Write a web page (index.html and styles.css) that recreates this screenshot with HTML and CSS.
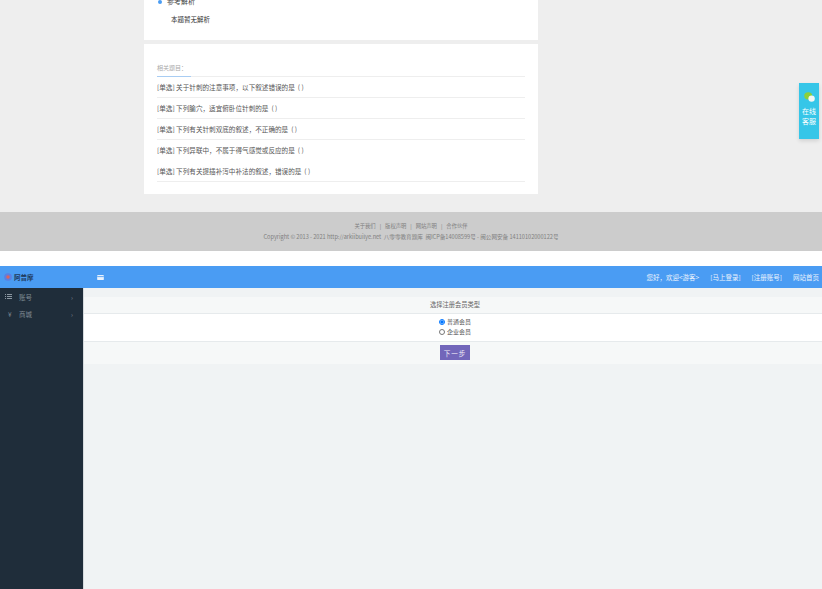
FILE: index.html
```html
<!DOCTYPE html>
<html lang="zh-CN">
<head>
  <meta charset="UTF-8">
  <title>注册会员</title>
  <link rel="stylesheet" href="styles.css">
</head>
<body>
  <!-- Question page -->
  <div class="question-page">
    <div class="card card-answer">
      <div class="answer-title">参考解析</div>
      <div class="answer-text">本题暂无解析</div>
    </div>
    <div class="card card-related">
      <div class="related-head"><span>相关题目&#65306;</span></div>
      <div class="related-row">[单选] 关于针刺的注意事项&#65292;以下叙述错误的是&nbsp;&nbsp;(&nbsp;)</div>
      <div class="related-row">[单选] 下列腧穴&#65292;适宜俯卧位针刺的是&nbsp;&nbsp;(&nbsp;)</div>
      <div class="related-row">[单选] 下列有关针刺双底的叙述&#65292;不正确的是&nbsp;&nbsp;(&nbsp;)</div>
      <div class="related-row row-plain">[单选] 下列异联中&#65292;不属于得气感觉或反应的是&nbsp;&nbsp;(&nbsp;)</div>
      <div class="related-row">[单选] 下列有关提插补泻中补法的叙述&#65292;错误的是&nbsp;&nbsp;(&nbsp;)</div>
    </div>
  </div>

  <div class="footer">
    <div class="footer-links"><span>关于我们</span><span>|</span><span>版权声明</span><span>|</span><span>网站声明</span><span>|</span><span>合作伙伴</span></div>
    <div>Copyright © 2013 - 2021 http://arkiibuilye.net &nbsp;八零零教育题库 &nbsp;闽ICP备14008599号 - 闽公网安备 14110102000122号</div>
  </div>

  <!-- Register page -->
  <div class="topbar">
    <div class="brand">
      <svg class="brand-logo" viewBox="0 0 10 10"><circle cx="5" cy="5" r="4.8" fill="#5d7fe0"/><circle cx="5" cy="5" r="2.2" fill="#d8665f"/></svg>
      <span>阿普摩</span>
    </div>
    <svg class="menu-icon" viewBox="0 0 8 6"><rect width="8" height="6" rx="1" fill="#e8f2fd"/><rect y="1.5" width="8" height="1" fill="#4a9cf3"/></svg>
    <div class="top-links">
      <span>您好&#65292;欢迎&lt;游客&gt;</span>
      <span>[马上登录]</span>
      <span>[注册账号]</span>
      <span>网站首页</span>
    </div>
  </div>
  <div class="main">
    <div class="sidebar">
      <div class="side-item">
        <svg class="side-icon" viewBox="0 0 7 5"><path d="M0 0h1v1H0zM2 0h5v1H2zM0 2h1v1H0zM2 2h5v1H2zM0 4h1v1H0zM2 4h5v1H2z" fill="#8b97a1"/></svg>
        <span class="side-label">账号</span><span class="side-arrow">›</span>
      </div>
      <div class="side-item">
        <span class="side-yen">¥</span>
        <span class="side-label">商城</span><span class="side-arrow">›</span>
      </div>
    </div>
    <div class="content">
      <div class="panel">
        <div class="panel-head">选择注册会员类型</div>
        <div class="panel-body">
          <label class="radio-row"><input type="radio" name="type" checked>普通会员</label>
          <label class="radio-row"><input type="radio" name="type">企业会员</label>
        </div>
        <div class="panel-foot"><button class="next-btn">下一步</button></div>
      </div>
    </div>
  </div>

  <!-- Floating service tab -->
  <div class="service">
    <svg class="service-icon" viewBox="0 0 11 10"><ellipse cx="4.2" cy="3.8" rx="4" ry="3.6" fill="#8ccf3a"/><circle cx="7.6" cy="6.6" r="3.2" fill="#f2f6f4"/></svg>
    <div>在线<br>客服</div>
  </div>
</body>
</html>
```

FILE: styles.css
```css
html, body {
  margin: 0;
  height: 589px;
  overflow: hidden;
}
body {
  position: relative;
  font-family: "Noto Sans CJK SC", "Liberation Sans", sans-serif;
  font-size: 6.5px;
  background: #fff;
  color: #555;
  display: flex;
  flex-direction: column;
}
.question-page {
  background: #eeeeee;
  height: 212px;
  box-sizing: border-box;
  padding-left: 144px;
}
.card {
  width: 394px;
  background: #fff;
  box-sizing: border-box;
}
.card-answer {
  height: 40px;
  margin-bottom: 4px;
  position: relative;
  padding: 0 0 0 23px;
  color: #444;
}
.answer-title {
  height: 3px;
  line-height: 3px;
  font-size: 7px;
}
.answer-title::before {
  content: "";
  position: absolute;
  left: 14px;
  top: 0;
  width: 4px;
  height: 4px;
  border-radius: 50%;
  background: #4a9cf3;
}
.answer-text {
  margin: 12px 0 0 4px;
  font-size: 6.5px;
  line-height: 8px;
  color: #333;
}
.card-related {
  height: 150px;
  padding: 17px 13px 0;
}
.related-head {
  height: 15px;
  border-bottom: 1px solid #eee;
  color: #aaa;
  font-size: 6px;
  line-height: 14px;
}
.related-head span {
  display: inline-block;
  width: 34px;
  height: 15px;
  border-bottom: 1px solid #a9cdf3;
}
.related-row {
  height: 20px;
  line-height: 20px;
  border-bottom: 1px solid #eee;
  white-space: nowrap;
  font-size: 6.6px;
}
.row-plain {
  border-bottom-color: #fff;
}
.footer {
  height: 39px;
  background: #cccccc;
  box-sizing: border-box;
  padding-top: 9px;
  text-align: center;
  color: #808080;
  font-size: 5.6px;
  line-height: 11px;
}
.footer-links {
  display: flex;
  justify-content: center;
  gap: 4px;
  font-size: 5.3px;
}
.topbar {
  margin-top: 15px;
  height: 22px;
  background: #4a9cf3;
  display: flex;
  align-items: center;
  color: #eaf3fd;
}
.brand {
  width: 97px;
  display: flex;
  align-items: center;
  gap: 2px;
  padding-left: 4px;
  box-sizing: border-box;
  color: #1f3a5c;
  font-weight: bold;
}
.brand-logo {
  width: 8px;
  height: 8px;
}
.menu-icon {
  width: 7px;
  height: 5px;
}
.top-links {
  margin-left: auto;
  display: flex;
  gap: 11px;
  padding-right: 3px;
}
.main {
  flex: 1;
  display: flex;
}
.sidebar {
  width: 84px;
  background: #1f2d3a;
  border-right: 1px solid #d5dadd;
  box-sizing: border-box;
}
.side-item {
  height: 17.5px;
  display: flex;
  align-items: center;
  padding: 0 10px 0 5px;
  color: #7f8b95;
}
.side-icon {
  width: 7px;
  height: 5px;
  margin-right: 7px;
}
.side-yen {
  width: 14px;
  padding-left: 3px;
  box-sizing: border-box;
}
.side-label {
  flex: 1;
}
.content {
  flex: 1;
  background: #f0f3f4;
  padding-top: 9px;
}
.panel {
  text-align: center;
}
.panel-head, .panel-body, .panel-foot {
  padding-left: 4px;
}
.panel-head {
  height: 16px;
  line-height: 16px;
  background: #f6f8f8;
  border-bottom: 1px solid #e6eaec;
  color: #666;
  font-size: 6.25px;
}
.panel-body {
  background: #fff;
  height: 28px;
  box-sizing: border-box;
  padding-top: 3px;
  border-bottom: 1px solid #e6eaec;
  font-size: 6px;
}
.radio-row {
  display: flex;
  justify-content: center;
  align-items: center;
  gap: 2px;
  height: 10px;
  line-height: 10px;
}
.radio-row input {
  width: 6px;
  height: 6px;
  margin: 0;
}
.panel-foot {
  height: 22px;
  background: #f6f8f8;
  padding-top: 3px;
  box-sizing: border-box;
}
.next-btn {
  width: 30px;
  height: 15px;
  padding: 0;
  border: none;
  background: #7266ba;
  color: #f0eef8;
  font-family: inherit;
  font-size: 6.5px;
  letter-spacing: 1px;
}
.service {
  position: absolute;
  right: 3px;
  top: 83px;
  width: 20px;
  height: 56px;
  box-sizing: border-box;
  padding-top: 9px;
  background: #36c6e8;
  color: #fff;
  text-align: center;
  font-size: 7px;
  line-height: 9.5px;
  box-shadow: 0 2px 4px rgba(0,0,0,0.12);
}
.service-icon {
  display: block;
  width: 11px;
  height: 10px;
  margin: 0 auto 5px;
}
```
